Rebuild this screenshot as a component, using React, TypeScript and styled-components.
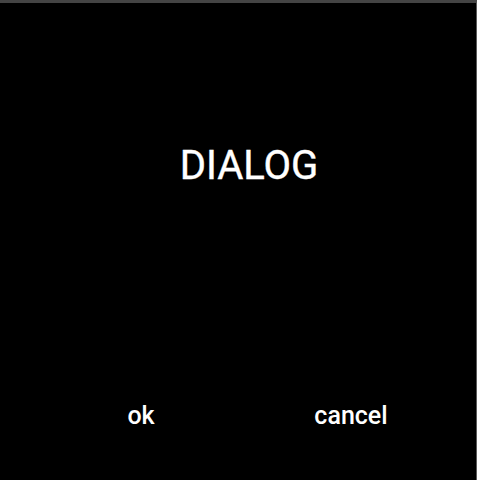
import React from "react";
import styled, { createGlobalStyle } from "styled-components";

const GlobalStyle = createGlobalStyle`
  html, body {
    margin: 0;
    padding: 0;
    background: #000000;
  }
  * {
    box-sizing: border-box;
  }
`;

const DialogWrapper = styled.div`
  width: 477px;
  height: 480px;
  background: #000000;
  border-top: 3px solid #444444;
  border-right: 1px solid #5a5a5a;
  display: flex;
  flex-direction: column;
  font-family: Roboto, "Noto Sans", sans-serif;
  color: #ffffff;
`;

const Title = styled.h1`
  margin: 143px 0 0 22px;
  font-size: 40px;
  line-height: 40px;
  font-weight: 400;
  text-align: center;
  color: #ffffff;
  -webkit-text-stroke: 0.4px #ffffff;
`;

const Spacer = styled.div`
  flex: 1;
`;

const ButtonRow = styled.div`
  display: grid;
  grid-template-columns: 210px 210px;
  margin: 0 0 52px 36px;
`;

const DialogButton = styled.button`
  background: transparent;
  border: none;
  padding: 0;
  margin: 0;
  font-family: Roboto, "Noto Sans", sans-serif;
  font-size: 25px;
  line-height: 24px;
  font-weight: 500;
  color: #ffffff;
  text-align: center;
  cursor: pointer;
`;

export default function App() {
  return (
    <>
      <GlobalStyle />
      <DialogWrapper>
        <Title>DIALOG</Title>
        <Spacer />
        <ButtonRow>
          <DialogButton>ok</DialogButton>
          <DialogButton>cancel</DialogButton>
        </ButtonRow>
      </DialogWrapper>
    </>
  );
}
